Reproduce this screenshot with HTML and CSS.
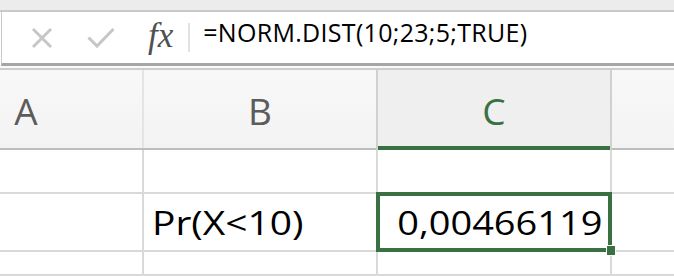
FILE: index.html
```html
<!DOCTYPE html>
<html lang="en">
    <head>
        <meta charset="UTF-8">
        <meta name="viewport" content="width=device-width, initial-scale=1.0">
        <title>NORM.DIST</title>
        <link rel="stylesheet" href="styles.css">
    </head>
    <body>
        <div class="topo"></div>

        <div class="barra">
            <svg class="icone cancelar" width="22" height="22" viewBox="0 0 22 22">
                <path d="M2 2 L20 20 M20 2 L2 20" />
            </svg>
            <svg class="icone confirmar" width="28" height="22" viewBox="0 0 28 22">
                <path d="M1.5 10.5 L10 19 L26.5 2" />
            </svg>
            <span class="fx">fx</span>
            <span class="divisor"></span>
            <span class="formula">=NORM.DIST(10;23;5;TRUE)</span>
        </div>

        <div class="espaco"></div>

        <div class="planilha">
            <div class="cabecalho">
                <div class="col">A</div>
                <div class="col">B</div>
                <div class="col ativa">C</div>
                <div class="col"></div>
            </div>
            <div class="linha alta1">
                <div class="celula"></div>
                <div class="celula"></div>
                <div class="celula"></div>
                <div class="celula"></div>
            </div>
            <div class="linha alta2">
                <div class="celula"></div>
                <div class="celula"><span class="valor">Pr(X&lt;10)</span></div>
                <div class="celula numero selecionada"><span class="valor">0,00466119</span><span class="alca"></span></div>
                <div class="celula"></div>
            </div>
            <div class="linha alta3">
                <div class="celula"></div>
                <div class="celula"></div>
                <div class="celula"></div>
                <div class="celula"></div>
            </div>
        </div>
    </body>
</html>
```

FILE: styles.css
```css
*{
    margin: 0;
    padding: 0;
    box-sizing: border-box;
}
body{
    width: 674px;
    height: 276px;
    overflow: hidden;
    background-color: #ffffff;
    font-family: 'Open Sans', 'Liberation Sans', sans-serif;
    color: #000000;
}
.topo{
    height: 12px;
    background-color: #ececec;
    border-bottom: 2px solid #c9c9c9;
}
.barra{
    height: 54px;
    margin-left: 1px;
    border-left: 1px solid #c9c9c9;
    border-bottom: 3px solid #a6a6a6;
    display: flex;
    align-items: center;
}
.icone{
    fill: none;
    stroke: #c6c6c6;
    stroke-width: 3;
}
.cancelar{
    margin-left: 29px;
}
.confirmar{
    margin-left: 34px;
}
.fx{
    font-family: 'Liberation Serif', serif;
    font-style: italic;
    font-size: 35px;
    color: #505050;
    margin-left: 33px;
    margin-top: -4px;
}
.divisor{
    width: 2px;
    height: 29px;
    background-color: #e2e2e2;
    margin-left: 15px;
}
.formula{
    font-size: 25px;
    letter-spacing: 0.3px;
    margin-left: 13px;
    margin-top: -11px;
}
.espaco{
    height: 4px;
    background-color: #fafafa;
    border-bottom: 2px solid #cdcdcd;
}
.planilha{
    margin-left: -90px;
    width: 764px;
}
.cabecalho, .linha{
    display: grid;
    grid-template-columns: 232px 232px 232px 1fr;
    column-gap: 2px;
}
.cabecalho{
    height: 80px;
    background: linear-gradient(#e4e4e4, #e4e4e4) no-repeat top / 100% 78px, #bdbdbd;
}
.col{
    height: 78px;
    background: linear-gradient(#f8f8f8, #f3f3f3);
    color: #5c5c5c;
    font-size: 37px;
    display: flex;
    align-items: center;
    justify-content: center;
    padding-top: 2px;
}
.col.ativa{
    height: 80px;
    background: #efefef;
    color: #3a7143;
    border-bottom: 4px solid #3a7143;
    padding-top: 4px;
    box-shadow: -2px 0 0 #d0d0d0, 2px 0 0 #d0d0d0;
}
.linha{
    background-color: #d9d9d9;
    padding-bottom: 2px;
}
.alta1{
    height: 44px;
}
.alta2{
    height: 58px;
}
.alta3{
    height: 24px;
}
.celula{
    background-color: #ffffff;
    font-size: 33px;
    display: flex;
    align-items: flex-end;
    line-height: 1;
    padding: 0 8px 11px;
    position: relative;
}
.valor{
    display: inline-block;
    transform: scaleX(1.18);
    transform-origin: left bottom;
}
.numero{
    justify-content: flex-end;
}
.numero .valor{
    transform: scaleX(1.15);
    transform-origin: right bottom;
}
.selecionada{
    box-shadow: 0 0 0 2px #3a7143, inset 0 0 0 2px #3a7143;
    z-index: 1;
}
.alca{
    position: absolute;
    right: -6px;
    bottom: -6px;
    width: 10px;
    height: 11px;
    background-color: #3a7143;
    border: 1px solid #ffffff;
}
```
